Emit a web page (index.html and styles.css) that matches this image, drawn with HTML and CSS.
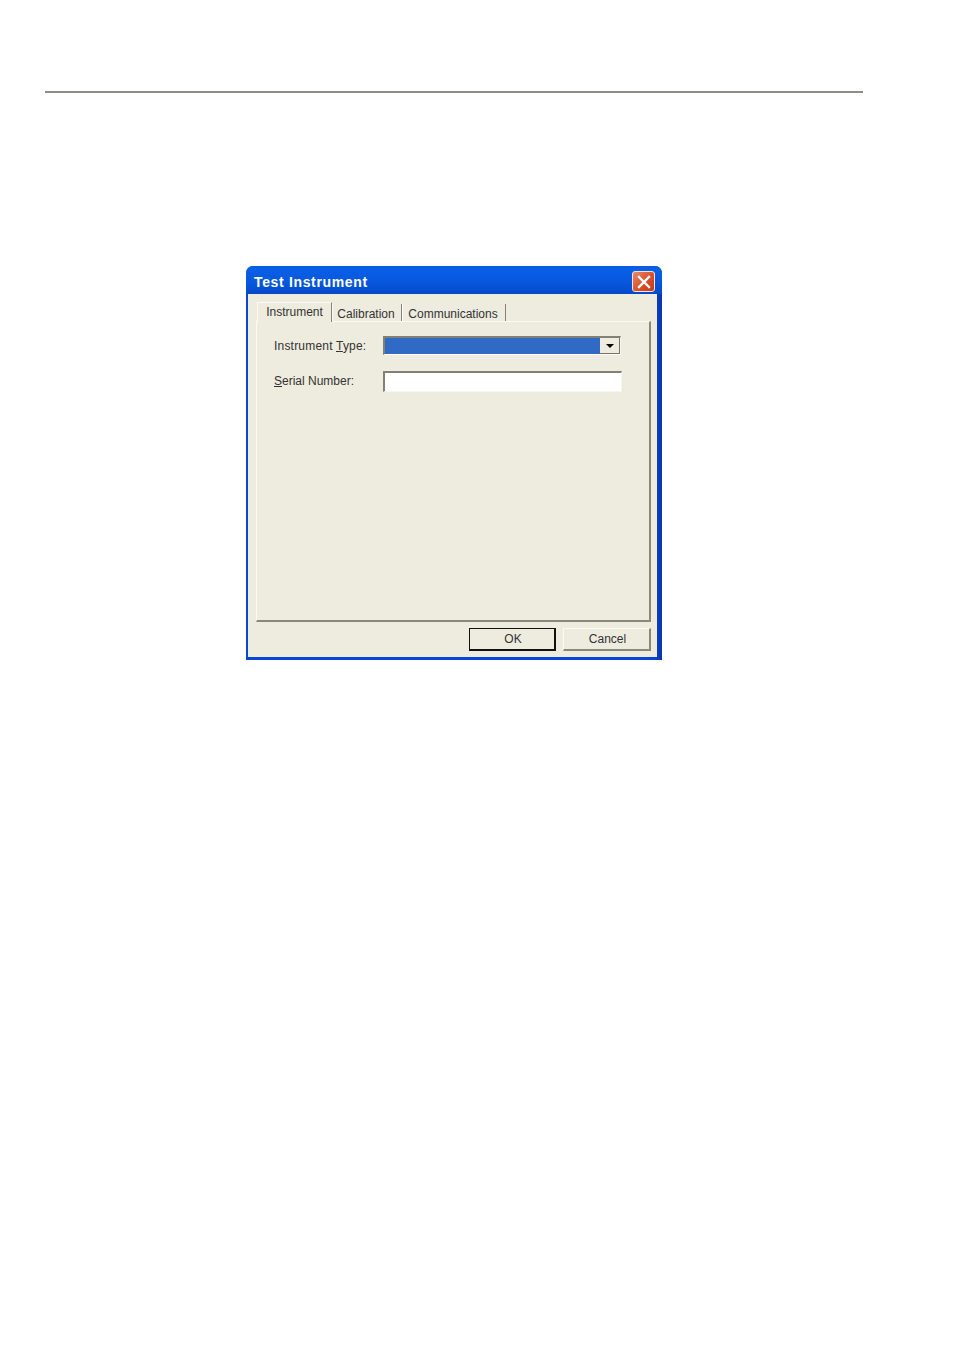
FILE: index.html
```html
<!DOCTYPE html>
<html lang="en">
<head>
    <meta charset="UTF-8">
    <title>Test Instrument</title>
    <link rel="stylesheet" href="styles.css">
</head>
<body>
    <div class="page-rule"></div>
    <div class="dialog">
        <div class="titlebar">
            <span class="title">Test Instrument</span>
            <div class="close-btn">
                <svg width="14" height="14" viewBox="0 0 14 14">
                    <path d="M2 2 L12 12 M12 2 L2 12" stroke="#fff" stroke-width="2.4" stroke-linecap="square"/>
                </svg>
            </div>
        </div>
        <div class="dialog-body">
            <div class="tabs">
                <div class="tab tab-active">Instrument</div>
                <div class="tab tab-calibration">Calibration</div>
                <div class="tab tab-comms">Communications</div>
            </div>
            <div class="panel">
                <div class="field field-type">
                    <label class="field-label label-type">Instrument <u>T</u>ype:</label>
                    <div class="combo">
                        <div class="combo-value"></div>
                        <div class="combo-btn"><span class="arrow"></span></div>
                    </div>
                </div>
                <div class="field field-serial">
                    <label class="field-label label-serial"><u>S</u>erial Number:</label>
                    <div class="text-input"></div>
                </div>
            </div>
            <div class="buttons">
                <div class="btn btn-default">OK</div>
                <div class="btn btn-cancel">Cancel</div>
            </div>
        </div>
    </div>
</body>
</html>
```

FILE: styles.css
```css
body {
    margin: 0;
    padding: 91px 0 0 45px;
    background-color: #fff;
    font-family: "Liberation Sans", Arial, sans-serif;
    font-size: 12px;
    color: #333;
}
.page-rule {
    width: 818px;
    height: 2px;
    background-color: #8e8e86;
}
.dialog {
    width: 416px;
    height: 394px;
    margin: 173px 0 0 201px;
    display: flex;
    flex-direction: column;
    box-sizing: border-box;
    border-radius: 7px 7px 0 0;
    background: linear-gradient(90deg, #0a46d6 98%, #0a37a8);
    overflow: hidden;
}
.titlebar {
    height: 28px;
    flex-shrink: 0;
    display: flex;
    align-items: center;
    justify-content: space-between;
    padding: 0 7px 0 8px;
    background: linear-gradient(#0a5be0, #0a5fe8 12%, #0757dc 60%, #0549c8);
}
.title {
    color: #fff;
    font-size: 14px;
    font-weight: bold;
    letter-spacing: 0.65px;
    margin-top: 3px;
}
.close-btn {
    width: 23px;
    height: 21px;
    margin-top: 3px;
    display: flex;
    align-items: center;
    justify-content: center;
    border: 1px solid #f2e4df;
    border-radius: 3px;
    box-sizing: border-box;
    background: linear-gradient(135deg, #e98a6c, #d9502b 55%, #c63a17);
}
.dialog-body {
    flex-grow: 1;
    margin: 0 5px 3px 2px;
    padding: 0 6px 0 8px;
    background-color: #eeebdf;
    display: flex;
    flex-direction: column;
}
.tabs {
    height: 28px;
    display: flex;
    align-items: flex-end;
    margin-bottom: -1px;
    padding-left: 1px;
    position: relative;
    z-index: 1;
}
.tab {
    box-sizing: border-box;
    height: 17px;
    display: flex;
    align-items: center;
    justify-content: center;
    border-right: 1px solid #85837a;
    border-left: 1px solid #fbfaf4;
    margin-bottom: 1px;
    padding: 2px 2px 0 0;
}
.tab-active {
    width: 75px;
    height: 20px;
    margin-bottom: 0;
    padding: 0 0 2px 0;
    background-color: #eeebdf;
    border-top: 1px solid #fbfaf4;
}
.tab-calibration {
    width: 70px;
}
.tab-comms {
    width: 104px;
}
.panel {
    box-sizing: border-box;
    height: 301px;
    flex-shrink: 0;
    padding: 14px 0 0 17px;
    border-top: 1px solid #fbfaf4;
    border-left: 1px solid #fbfaf4;
    border-right: 2px solid #8a887c;
    border-bottom: 2px solid #8a887c;
}
.field {
    display: flex;
    align-items: center;
}
.field-label {
    width: 109px;
}
.label-type {
    letter-spacing: 0.2px;
}
.label-serial {
    margin-top: -2px;
}
.field-serial {
    margin-top: 16px;
}
.combo {
    box-sizing: border-box;
    width: 238px;
    height: 19px;
    display: flex;
    border-top: 2px solid #827f73;
    border-left: 2px solid #827f73;
    border-right: 1px solid #f7f6ee;
    border-bottom: 1px solid #fff;
    background-color: #fff;
}
.combo-value {
    flex-grow: 1;
    background-color: #316ac5;
}
.combo-btn {
    width: 20px;
    display: flex;
    align-items: center;
    justify-content: center;
    background-color: #eeebdf;
    border-right: 1px solid #75736a;
    border-bottom: 1px solid #75736a;
    box-sizing: border-box;
}
.arrow {
    width: 0;
    height: 0;
    border-left: 4px solid transparent;
    border-right: 4px solid transparent;
    border-top: 4px solid #000;
}
.text-input {
    box-sizing: border-box;
    width: 239px;
    height: 21px;
    background-color: #fff;
    border-top: 2px solid #827f73;
    border-left: 2px solid #827f73;
    border-right: 1px solid #f7f6ee;
    border-bottom: 1px solid #f7f6ee;
}
.buttons {
    display: flex;
    justify-content: flex-end;
    gap: 7px;
    margin-top: 6px;
}
.btn {
    box-sizing: border-box;
    width: 88px;
    height: 23px;
    display: flex;
    align-items: center;
    justify-content: center;
    border-top: 1px solid #fbfaf4;
    border-left: 1px solid #fbfaf4;
    border-right: 2px solid #8a887c;
    border-bottom: 2px solid #8a887c;
}
.btn-cancel {
    padding-left: 2px;
}
.btn-default {
    width: 87px;
    padding-left: 2px;
    border: 1px solid #111;
    border-right-width: 2px;
    border-bottom-width: 2px;
}
```
